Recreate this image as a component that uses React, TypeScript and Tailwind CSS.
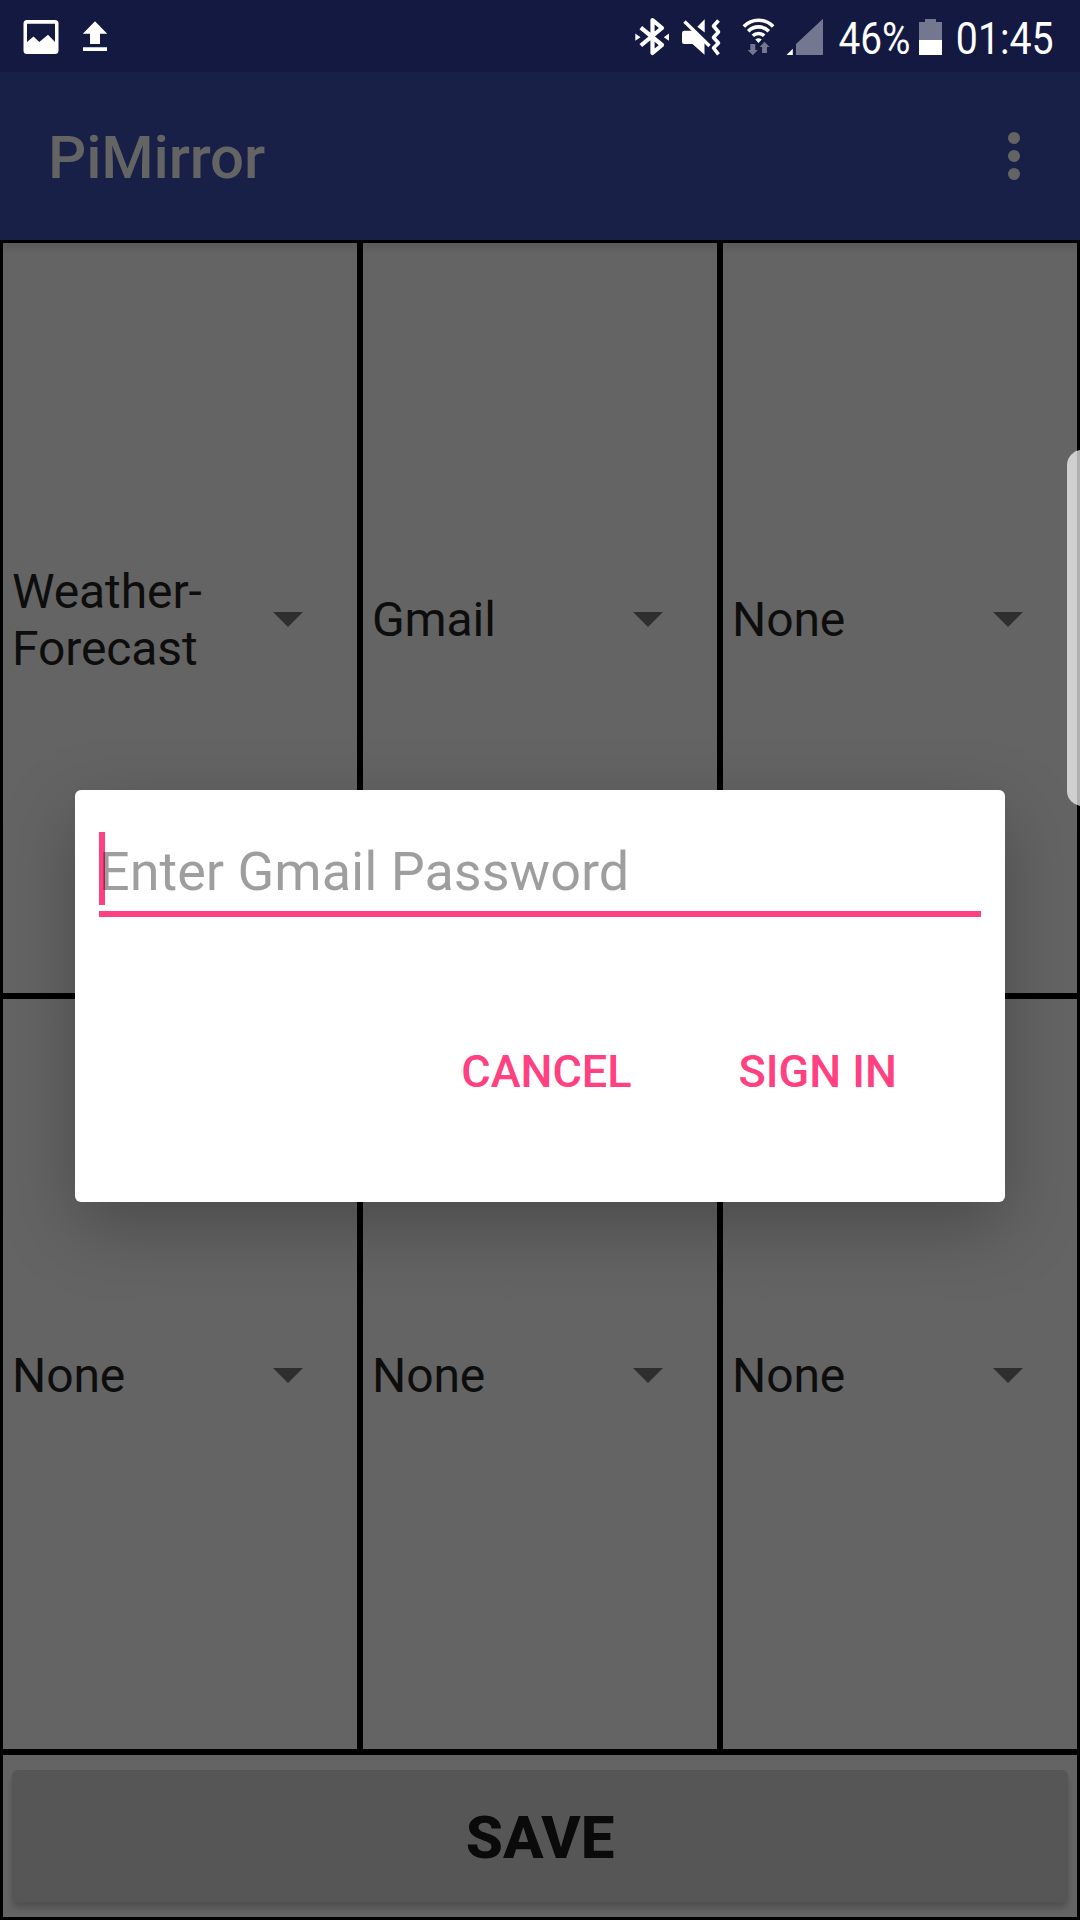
const cells = ['Weather-\nForecast', 'Gmail', 'None', 'None', 'None', 'None'];

function LeftIcons() {
  return (
    <svg width="120" height="72" viewBox="0 0 120 72" fill="#fff">
      <path
        fillRule="evenodd"
        d="M27 20h28a3.5 3.5 0 0 1 3.5 3.5v27A3.5 3.5 0 0 1 55 54H27a3.500 3.500 0 0 1-3.500-3.500v-27A3.500 3.500 0 0 1 27 20zM27 23.700V42l6.500-5.500L39.300 42 48 34.700l7 7.300V23.700z"
      />
      <path d="M95 21.300l12.200 12.400H100V44H90V33.700h-7.200zM83 47.300h24V51H83z" />
    </svg>
  );
}

function SystemIcons() {
  return (
    <svg width="205" height="72" viewBox="630 0 205 72" fill="#fff">
      <path
        d="M640.800 27.700L662 45l-9.500 8V20L662 28l-21.200 17.500"
        fill="none"
        stroke="#fff"
        strokeWidth="4.200"
        strokeLinejoin="round"
      />
      <path d="M635.300 33.500l5.200 3.700-5.200 3.500zM669 33.500l-5.200 3.700 5.200 3.500z" />
      <path d="M684 30.700h8.500L704.500 42v12.700L692.500 44H684q-2-.2-2-2V33q0-2 2-2.300zM697.300 26.800l7.400-7.600V32.500z" />
      <path d="M684.500 21.500L709.500 46" stroke="#fff" strokeWidth="3.400" />
      <path
        d="M718.500 20.500l-5 5.500 5 6-5 5.500 5 5.500-5 5 5 6.300"
        fill="none"
        stroke="#fff"
        strokeWidth="3.600"
        strokeLinejoin="round"
      />
      <g fill="none" stroke="#fff" strokeWidth="3.600">
        <path d="M743.800 26.400a20.500 20.500 0 0 1 29.400 0" />
        <path d="M748.200 31.200a14.500 14.500 0 0 1 20.600 0" />
        <path d="M752.800 35.800a8.300 8.300 0 0 1 11.400 0" />
      </g>
      <path d="M755.300 39.500q3.200-2.600 6.400 0l-3.200 3.500z" />
      <g fill="#73778f">
        <path d="M750.300 44h5v6h2.500l-5 5.200-5.100-5.200h2.600zM762 53h5v-6h2.600l-5.100-5.200-5 5.200h2.500z" />
        <path d="M796 44l27-25.200v36.200h-27z" />
      </g>
      <path d="M786.500 55l6.300-6.300V55z" />
    </svg>
  );
}

function StatusBar() {
  return (
    <header className="flex h-[72px] shrink-0 justify-between bg-[#131941] text-white">
      <LeftIcons />
      <div className="flex">
        <SystemIcons />
        <span className="mt-[12px] w-[84px] origin-left scale-x-[0.862] pl-[4px] text-[45px] leading-[53px] whitespace-nowrap">46%</span>
        <svg width="24" height="72" viewBox="0 0 24 72">
          <path d="M0 22h6v-3h11v3h6v18H0z" fill="#73778f" />
          <path d="M0 40h23v15H0z" fill="#fff" />
        </svg>
        <span className="mt-[12px] ml-[12px] w-[125px] origin-left scale-x-[0.872] pl-[1px] text-[45px] leading-[53px] whitespace-nowrap">01:45</span>
      </div>
    </header>
  );
}

function Spinner({ label }: { label: string }) {
  return (
    <div className="flex items-center justify-between border-[3px] border-black pt-[3px] pr-[54px] pl-[9px]">
      <span className="text-[48px] leading-[57px] tracking-[-0.1px] whitespace-pre text-[#0d0d0d]">{label}</span>
      <svg width="30" height="15" viewBox="0 0 30 15" fill="#2e2e2e">
        <path d="M0 0h30L15 15z" />
      </svg>
    </div>
  );
}

export default function App() {
  return (
    <div className="relative flex h-[1920px] w-[1080px] flex-col overflow-hidden bg-[#646464] font-[Roboto,sans-serif]">
      <StatusBar />
      <div className="flex h-[168px] shrink-0 items-center justify-between bg-[#192048] pr-[60px] pl-[48px]">
        <h1 className="pt-[4px] text-[60px] leading-[70px] font-medium tracking-[-0.15px] text-[#646464]">PiMirror</h1>
        <div className="flex flex-col gap-[6px]">
          <i className="size-[12px] rounded-full bg-[#646464]" />
          <i className="size-[12px] rounded-full bg-[#646464]" />
          <i className="size-[12px] rounded-full bg-[#646464]" />
        </div>
      </div>
      <main className="grid h-[1512px] shrink-0 grid-cols-3 grid-rows-2 bg-linear-to-b from-[#585858] to-[#646464] to-[14px]">
        {cells.map((label, i) => (
          <Spinner key={i} label={label} />
        ))}
      </main>
      <footer className="h-[168px] border-[3px] border-black px-[9px] pt-[15px]">
        <button className="block h-[132px] w-full rounded-[6px] bg-[#565656] pt-[4px] text-[60px] leading-[70px] font-extrabold text-[#0a0a0a] shadow-[0_6px_6px_rgba(0,0,0,0.2)]">
          SAVE
        </button>
      </footer>

      <section className="absolute top-[790px] left-[75px] h-[412px] w-[930px] rounded-[6px] bg-white px-[24px] pt-[42px] shadow-[0_24px_72px_rgba(0,0,0,0.26)]">
        <div className="relative h-[85px] border-b-[6px] border-[#ff4081]">
          <i className="absolute top-0 left-0 h-[73px] w-[6px] bg-[#ff4081]" />
          <p className="relative pt-[8px] text-[54px] leading-[64px] text-black/38">Enter Gmail Password</p>
        </div>
        <div className="mt-[128px] flex justify-end gap-[107px] pr-[84px] text-[45px] leading-[54px] font-medium text-[#ff4081]">
          <button>CANCEL</button>
          <button>SIGN IN</button>
        </div>
      </section>
      <i className="absolute top-[450px] left-[1066.5px] h-[356px] w-[30px] rounded-[18px] bg-white/69" />
    </div>
  );
}
